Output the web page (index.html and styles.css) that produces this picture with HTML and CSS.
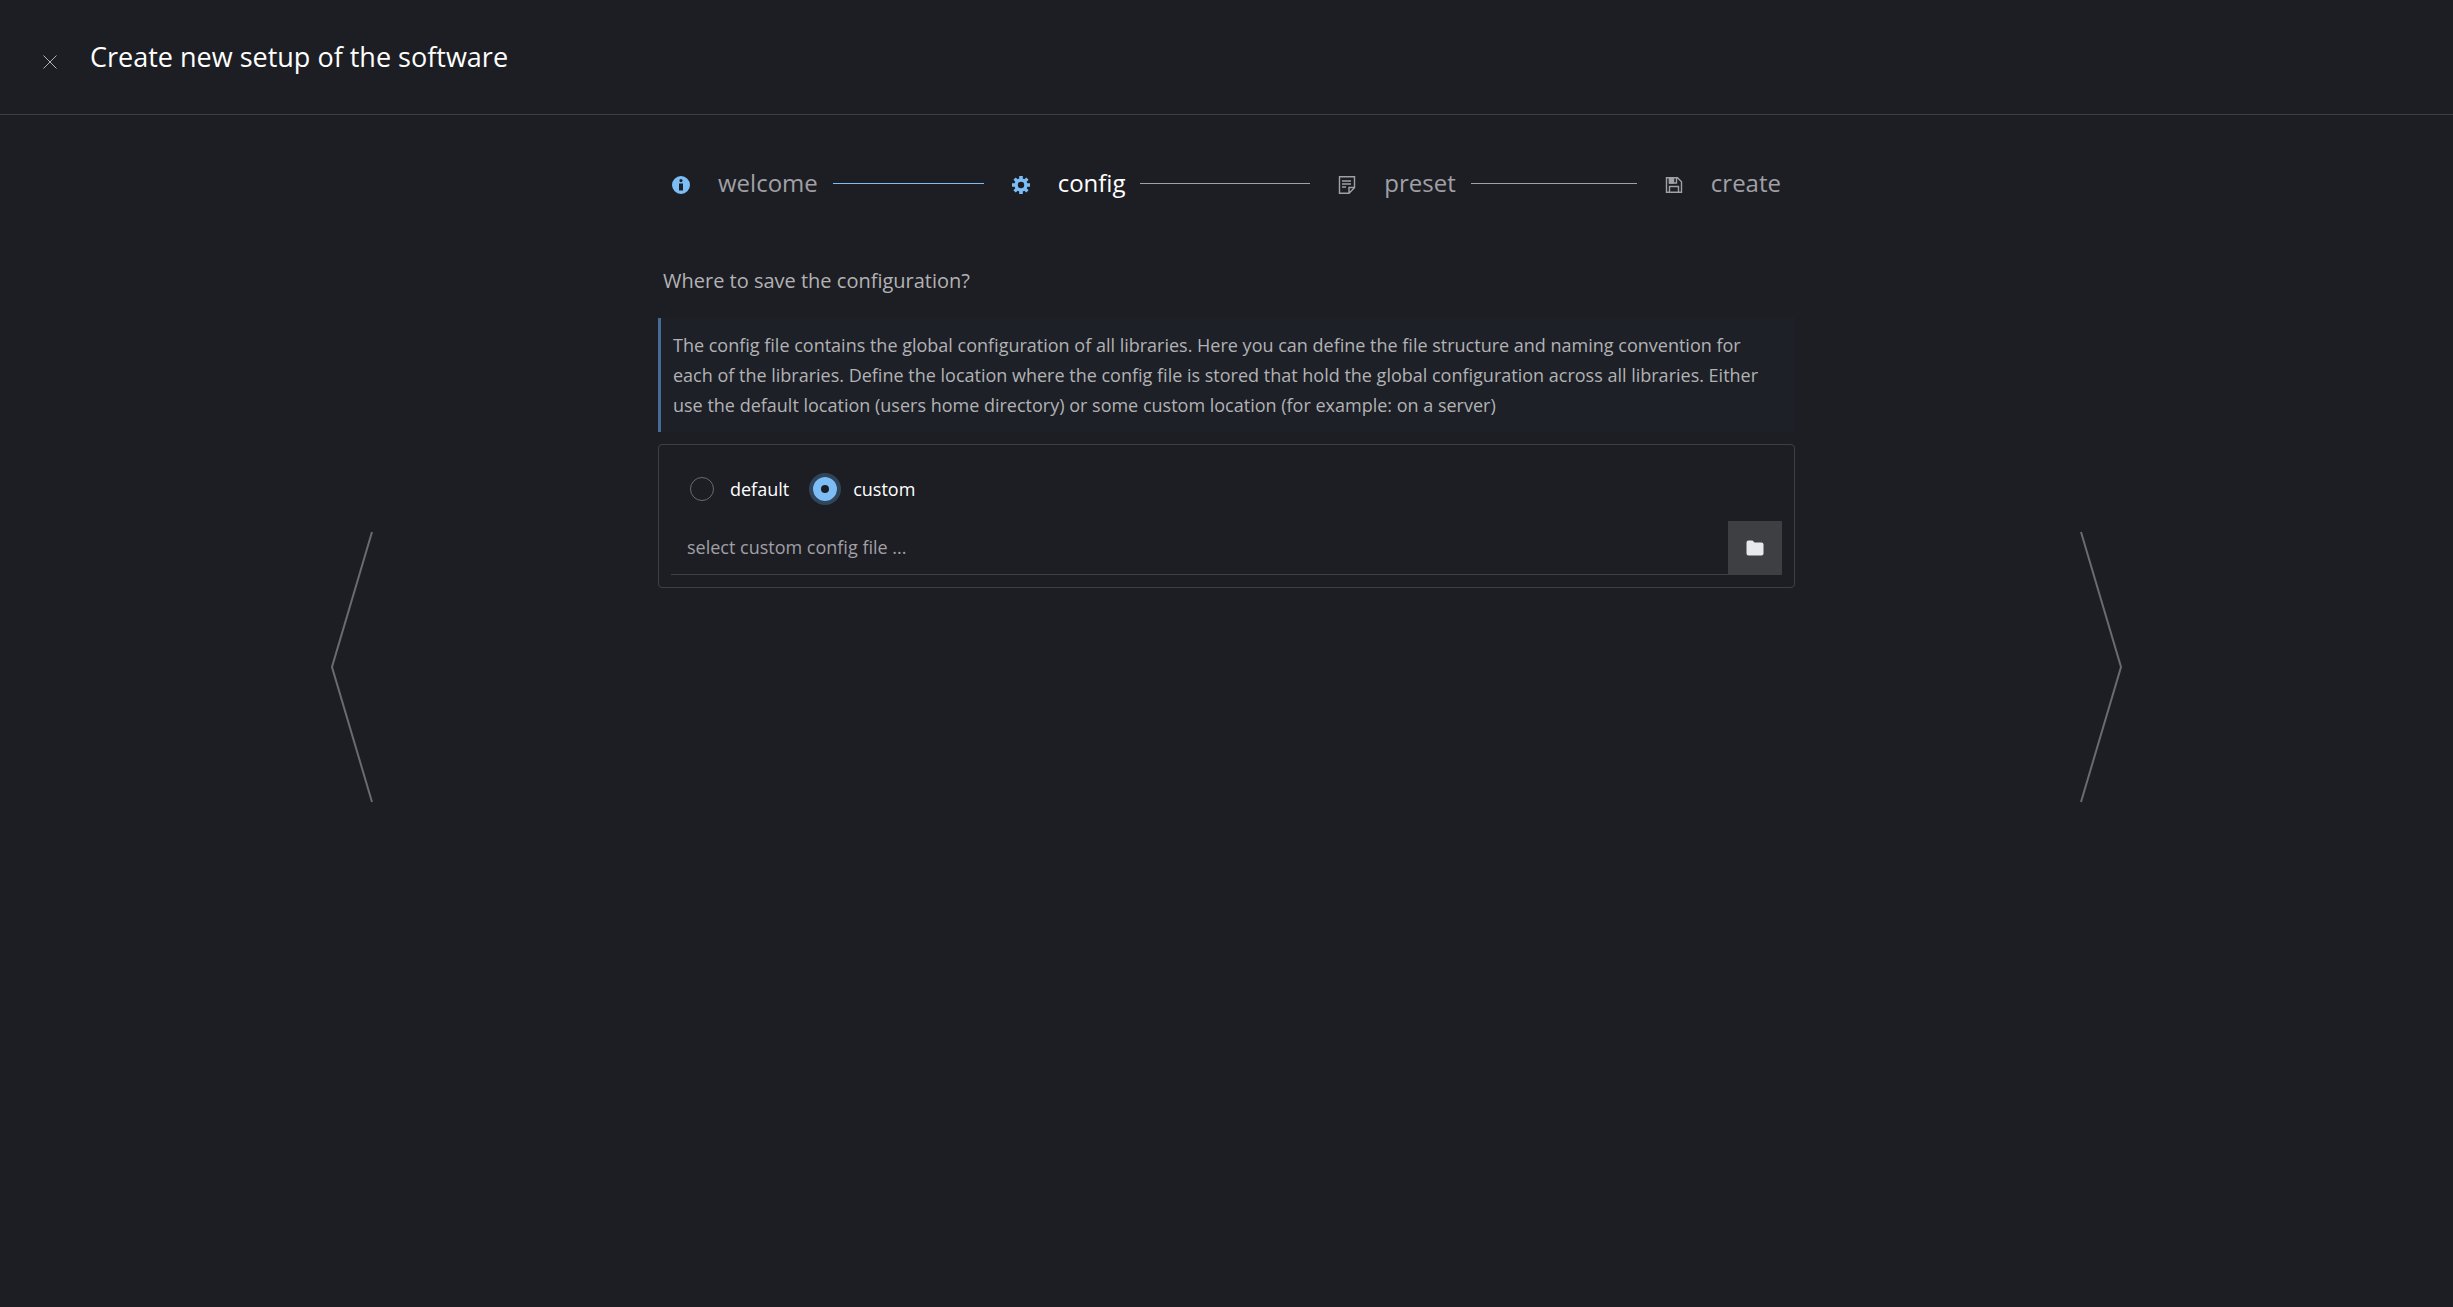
FILE: index.html
```
<!DOCTYPE html>
<html lang="en">
<head>
  <meta charset="UTF-8" />
  <meta name="viewport" content="width=device-width, initial-scale=1.0"/>
  <title>Create new setup of the software</title>
  <link rel="stylesheet" href="styles.css">
</head>
<body>

  <header class="header">
    <button class="close" type="button" aria-label="Close">
      <svg width="16" height="16" viewBox="0 0 16 16"><path d="M1.5 1.5l13 13M14.5 1.5l-13 13"/></svg>
    </button>
    <h1>Create new setup of the software</h1>
  </header>

  <main class="wizard">
    <button class="arrow" type="button" aria-label="Previous step">
      <svg width="42" height="272" viewBox="0 0 42 272"><path d="M41 1L1 136l40 135"/></svg>
    </button>

    <div class="content">
      <!-- Steps -->
      <ol class="steps">
        <li class="step done">
          <svg width="18" height="18" viewBox="0 0 18 18"><path fill-rule="evenodd" d="M9 0a9 9 0 1 1 0 18A9 9 0 0 1 9 0zM9 3a1.600 1.600 0 1 0 0 3.200 1.600 1.600 0 0 0 0-3.200zM7 7.500v7h4v-7z"/></svg>
          <span>welcome</span>
        </li>
        <li class="step done active">
          <svg width="18" height="18" viewBox="0 0 18 18"><path fill-rule="evenodd" d="M7.200 0h3.600v2.600l1.500.7 2-1.900 2.300 2.300-1.900 2 .7 1.500H18v3.600h-2.600l-.7 1.500 1.900 2-2.300 2.300-2-1.900-1.500.7V18H7.200v-2.600l-1.500-.7-2 1.900-2.300-2.300 1.900-2-.7-1.500H0V7.200h2.600l.7-1.500-1.900-2 2.300-2.300 2 1.900 1.500-.7zM9 5.800a3.200 3.200 0 1 0 0 6.400 3.200 3.200 0 0 0 0-6.400z"/></svg>
          <span>config</span>
        </li>
        <li class="step">
          <svg class="line-icon" width="18" height="18" viewBox="0 0 18 18"><path d="M1.500.7h15v11l-5.500 5.600H1.500zM11 17v-5.500h5.500M4 5h9M4 8h9M4 11h4"/></svg>
          <span>preset</span>
        </li>
        <li class="step">
          <svg class="line-icon" width="18" height="18" viewBox="0 0 18 18"><path d="M1.500 1.700h11l4 4v10.600h-15zM4.500 2v5h7V2M4.500 16v-5.500h9V16"/><path class="shutter" d="M4.500 2h4v5h-4z"/></svg>
          <span>create</span>
        </li>
      </ol>

      <form class="config">
        <h2>Where to save the configuration?</h2>
        <p class="info">The config file contains the global configuration of all libraries. Here you can define the file structure and naming convention for each of the libraries. Define the location where the config file is stored that hold the global configuration across all libraries. Either use the default location (users home directory) or some custom location (for example: on a server)</p>
        <div class="panel">
          <div class="options">
            <label><input type="radio" name="location" value="default"> default</label>
            <label><input type="radio" name="location" value="custom" checked> custom</label>
          </div>
          <div class="file">
            <input type="text" aria-label="Custom config file" placeholder="select custom config file ...">
            <button type="button" aria-label="Browse">
              <svg width="18" height="16" viewBox="0 0 18 16"><path d="M2.500.500h4l2 2h7a2 2 0 0 1 2 2v9a2 2 0 0 1-2 2h-13a2 2 0 0 1-2-2v-11a2 2 0 0 1 2-2z"/></svg>
            </button>
          </div>
        </div>
      </form>
    </div>

    <button class="arrow" type="button" aria-label="Next step">
      <svg width="42" height="272" viewBox="0 0 42 272"><path d="M1 1l40 135L1 271"/></svg>
    </button>
  </main>

</body>
</html>
```
FILE: styles.css
```
* {
  box-sizing: border-box;
}

body {
  display: flex;
  flex-direction: column;
  min-height: 100vh;
  margin: 0;
  background-color: #1d1e23;
  color: #ffffff;
  font-family: 'Open Sans', sans-serif;
  font-size: 18px;
  line-height: 30px;
}

button {
  display: flex;
  align-items: center;
  justify-content: center;
  padding: 0;
  border: 0;
  background: none;
  cursor: pointer;
}

svg {
  display: block;
  flex: none;
}

.header {
  display: flex;
  align-items: center;
  gap: 32px;
  height: 115px;
  padding: 0 42px;
  border-bottom: 1px solid #3e3f42;
}

.close {
  margin-top: 10px;
}

.close path {
  fill: none;
  stroke: #b0b0b4;
}

h1 {
  margin: 0;
  font-size: 27px;
  font-weight: 400;
}

.wizard {
  flex: 1;
  display: flex;
  justify-content: space-between;
  gap: 32px;
  padding: 0 13.5% 88px;
}

.arrow path {
  fill: none;
  stroke: #6a6b6e;
  stroke-width: 2;
}

.content {
  flex: 0 1 1137px;
  padding-top: 51px;
}

/* Steps */
.steps {
  display: grid;
  grid-template-columns: 26fr 25fr 25fr auto;
  margin: 0;
  padding: 0 14px;
  list-style: none;
  font-size: 24px;
  line-height: 34px;
  color: #a0a0a6;
}

.step {
  display: flex;
  align-items: center;
}

.step svg {
  margin: 4px 28px 0 0;
  fill: #a0a0a6;
}

.step .line-icon {
  fill: none;
  stroke: #a0a0a6;
  stroke-width: 1.4;
}

.step .shutter {
  fill: #a0a0a6;
}

.step.done svg {
  fill: #7cbdf5;
}

.step.active {
  color: #ffffff;
}

.step:not(:last-child)::after {
  content: "";
  flex: 1;
  height: 1px;
  margin: 0 28px 0 15px;
  background-color: #a0a0a6;
}

.step.done:not(.active)::after {
  background-color: #7cbdf5;
}

h2 {
  margin: 66px 5px 22px;
  color: #b2b2b4;
  font-size: 20px;
  font-weight: 400;
}

.info {
  margin: 0 0 12px;
  padding: 12px 30px 12px 12px;
  border-left: 3px solid #446c94;
  background-color: #1d2027;
  color: #b2b2b4;
}

.panel {
  padding: 25px 12px 12px;
  border: 1px solid #3e3f42;
  border-radius: 4px;
}

.options {
  display: flex;
  gap: 24px;
  padding: 4px 19px 17px;
}

.options label {
  display: flex;
  align-items: center;
  gap: 16px;
}

.options input {
  appearance: none;
  width: 24px;
  height: 24px;
  margin: 0;
  border: 1px solid #6a6b6e;
  border-radius: 50%;
}

.options input:checked {
  border: 8px solid #7cbdf5;
  box-shadow: 0 0 0 4px #30455a;
}

.file {
  display: flex;
}

.file input {
  flex: 1;
  height: 54px;
  padding: 0 16px 2px;
  border: 0;
  border-bottom: 1px solid #3e3f42;
  outline: none;
  background: none;
  color: #ffffff;
  font: inherit;
}

.file input::placeholder {
  color: #a0a0a6;
}

.file button {
  width: 54px;
  height: 54px;
  background-color: #3e3f42;
  fill: #e9e9ed;
}
```
